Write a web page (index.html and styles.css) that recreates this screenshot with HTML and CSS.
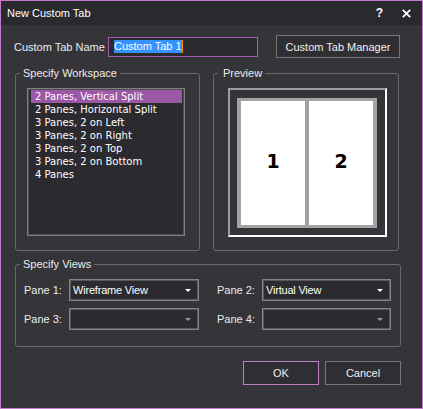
FILE: index.html
```html
<!DOCTYPE html>
<html>
<head>
<meta charset="utf-8">
<link rel="stylesheet" href="styles.css">
</head>
<body>
<div class="window">
  <div class="titlebar">
    <span class="title">New Custom Tab</span>
    <span class="tb-help">?</span>
    <span class="tb-close"><svg width="9" height="9" viewBox="0 0 9 9"><path d="M0.8 0.8 L8.2 8.2 M8.2 0.8 L0.8 8.2" stroke="#ffffff" stroke-width="1.8" fill="none"/></svg></span>
  </div>
  <div class="content">
    <div class="name-row">
      <span class="name-label">Custom Tab Name</span>
      <div class="name-input"><span class="sel">Custom Tab 1</span><span class="caret"></span></div>
      <button class="btn btn-manager">Custom Tab Manager</button>
    </div>
    <div class="groups">
      <fieldset class="group">
        <legend>Specify Workspace</legend>
        <ul class="listbox">
          <li class="selected">2 Panes, Vertical Split</li>
          <li>2 Panes, Horizontal Split</li>
          <li>3 Panes, 2 on Left</li>
          <li>3 Panes, 2 on Right</li>
          <li>3 Panes, 2 on Top</li>
          <li>3 Panes, 2 on Bottom</li>
          <li>4 Panes</li>
        </ul>
      </fieldset>
      <fieldset class="group">
        <legend class="legend-preview">Preview</legend>
        <div class="frame">
          <div class="panes">
            <div class="pane">1</div>
            <div class="pane">2</div>
          </div>
        </div>
      </fieldset>
    </div>
    <fieldset class="group views">
      <legend>Specify Views</legend>
      <div class="views-grid">
        <span class="pane-label">Pane 1:</span>
        <div class="combo"><span class="combo-text">Wireframe View</span><span class="arrow"></span></div>
        <span class="pane-label second">Pane 2:</span>
        <div class="combo"><span class="combo-text">Virtual View</span><span class="arrow"></span></div>
        <span class="pane-label">Pane 3:</span>
        <div class="combo"><span class="combo-text"></span><span class="arrow dim"></span></div>
        <span class="pane-label second">Pane 4:</span>
        <div class="combo"><span class="combo-text"></span><span class="arrow dim"></span></div>
      </div>
    </fieldset>
    <div class="actions">
      <button class="btn btn-action btn-ok">OK</button>
      <button class="btn btn-action">Cancel</button>
    </div>
  </div>
</div>
</body>
</html>
```

FILE: styles.css
```css
html, body {
  margin: 0;
  padding: 0;
  background: #353439;
}

body {
  font-family: "Liberation Sans", Arial, sans-serif;
  font-size: 11px;
  color: #ececec;
}

.window {
  width: 423px;
  height: 409px;
  box-sizing: border-box;
  border: 1px solid #c47ccc;
  background: #353439;
  display: flex;
  flex-direction: column;
}

.titlebar {
  height: 24px;
  flex: none;
  background: #2a292d;
  display: flex;
  align-items: center;
  padding-left: 6px;
  color: #ffffff;
  font-size: 11px;
}

.title {
  flex: 1;
}

.tb-help {
  font-weight: bold;
  font-size: 12px;
  margin-right: 19px;
}

.tb-close {
  display: flex;
  margin-right: 11px;
}

.content {
  padding: 10px 21px 0 14px;
  display: flex;
  flex-direction: column;
}

.content > * {
  flex: none;
}

.name-row {
  display: flex;
  align-items: center;
  height: 23px;
}

.name-label {
  width: 94px;
  margin-left: -1px;
  color: #ececec;
}

.name-input {
  width: 150px;
  height: 20px;
  box-sizing: border-box;
  border: 1px solid #a55bb0;
  background: #2b2a2e;
  display: flex;
  align-items: center;
  padding-left: 5px;
}

.sel {
  background: #3592ff;
  color: #ffffff;
  line-height: 13px;
}

.caret {
  width: 1px;
  height: 13px;
  background: #ff8a00;
}

.btn {
  font: inherit;
  color: #f0f0f0;
  background: #2f2e33;
  border: 1px solid #767676;
  box-sizing: border-box;
  padding: 0;
}

.btn-manager {
  margin-left: 18px;
  width: 124px;
  height: 23px;
}

.groups {
  display: grid;
  grid-template-columns: 185px 186px;
  column-gap: 13px;
  margin-top: 9px;
  height: 184px;
}

.group {
  margin: 0;
  padding: 0;
  border: 1px solid #6a6a6a;
  border-radius: 3px;
  min-width: 0;
  box-sizing: border-box;
}

legend {
  padding: 0 3px;
  margin-left: 4px;
  line-height: 13px;
  color: #ececec;
}

.legend-preview {
  padding-left: 5px;
}

.listbox {
  list-style: none;
  margin: 8px 0 0 11px;
  padding: 1px 2px 1px 3px;
  width: 158px;
  height: 148px;
  box-sizing: border-box;
  border: 1px solid #808080;
  box-shadow: inset 0 0 0 1px #4e4d52;
  background: #2b2a2e;
  font-family: "DejaVu Sans", Verdana, sans-serif;
  font-size: 10px;
  color: #ffffff;
}

.listbox li {
  line-height: 13px;
  height: 13px;
  padding-left: 4px;
  white-space: nowrap;
}

.listbox li.selected {
  background: #9a58a6;
}

.frame {
  margin: 8px 0 0 14px;
  width: 159px;
  height: 149px;
  box-sizing: border-box;
  border: 2px solid;
  border-color: #9c9c9c #ffffff #ffffff #9c9c9c;
  display: flex;
  align-items: center;
  justify-content: center;
}

.panes {
  display: flex;
  gap: 4px;
  padding: 3px 4px;
  background: #a3a3a3;
  width: 140px;
  height: 130px;
  box-sizing: border-box;
  margin-right: 1px;
}

.pane {
  flex: 1;
  background: #ffffff;
  display: flex;
  align-items: center;
  justify-content: center;
  font-family: "DejaVu Sans", Verdana, sans-serif;
  font-weight: bold;
  font-size: 19px;
  color: #000000;
  padding-bottom: 4px;
}

.views {
  margin-top: 7px;
  height: 89px;
}

.views-grid {
  display: grid;
  grid-template-columns: 45px 130px 63px 129px;
  grid-auto-rows: 22px;
  row-gap: 7px;
  padding: 8px 0 0 8px;
  align-items: center;
}

.pane-label {
  color: #ececec;
}

.pane-label.second {
  padding-left: 18px;
}

.combo {
  height: 22px;
  box-sizing: border-box;
  border: 1px solid #858585;
  box-shadow: inset 0 0 0 1px #58575c;
  background: #2b2a2e;
  display: flex;
  align-items: center;
  padding-left: 3px;
}

.combo-text {
  flex: 1;
  color: #ffffff;
  letter-spacing: -0.2px;
}

.arrow {
  width: 0;
  height: 0;
  border-left: 3px solid transparent;
  border-right: 3px solid transparent;
  border-top: 3px solid #ffffff;
  margin-right: 7px;
}

.arrow.dim {
  border-top-color: #9a9a9a;
}

.actions {
  display: flex;
  justify-content: flex-end;
  gap: 6px;
  margin-top: 14px;
}

.btn-action {
  width: 76px;
  height: 24px;
}

.btn-ok {
  border-color: #c07ec8;
}
```
